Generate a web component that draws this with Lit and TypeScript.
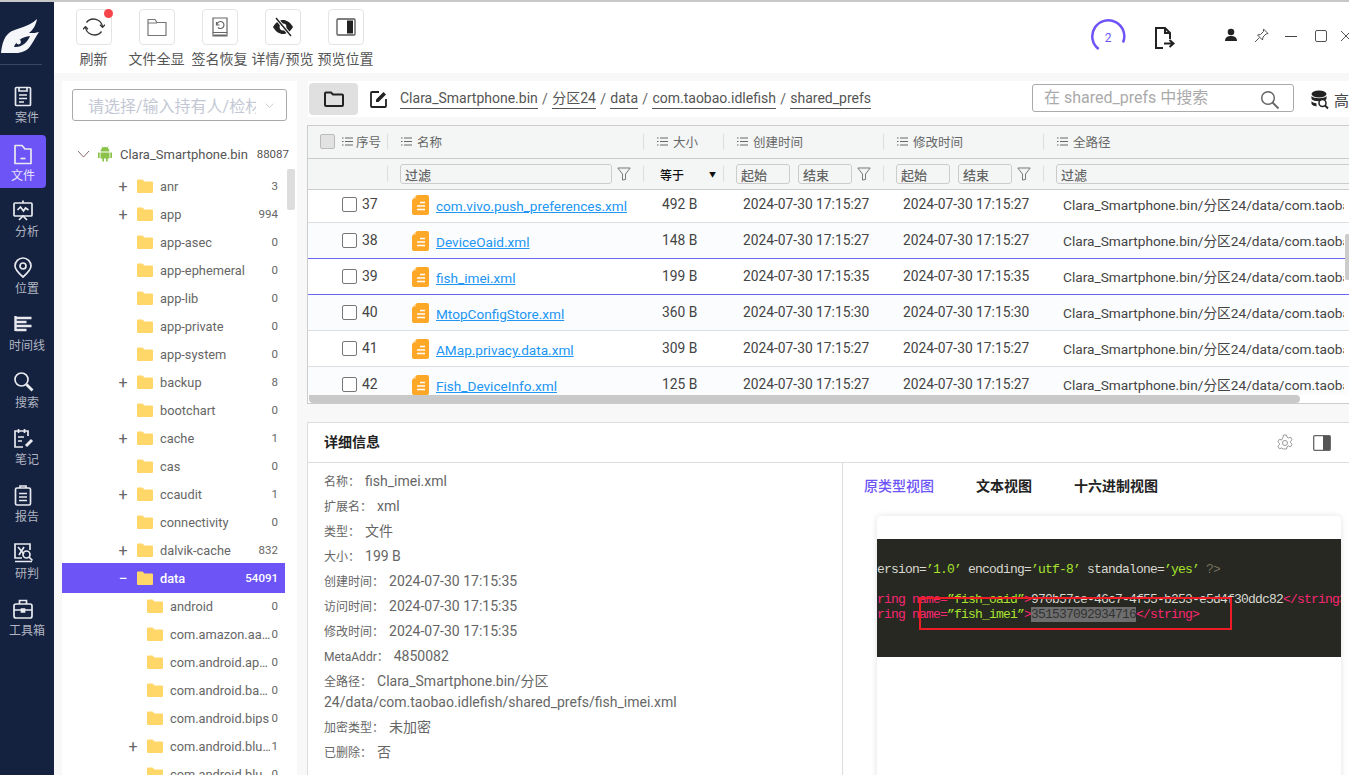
import { LitElement, html, css, svg } from "lit";
import { customElement } from "lit/decorators.js";

const navIcons: Record<string, unknown> = {
  case: svg`<rect x="3.500" y="2.500" width="15" height="18" rx="1"/><path d="M7 2.500v3.500h8V2.500M7 10h8M7 13.500h8M7 17h5"/>`,
  file: svg`<path d="M3 2.500h7l3 3.500h6v14.500H3z" stroke-linejoin="round"/><path d="M8.500 15.500h5"/>`,
  analysis: svg`<rect x="2" y="4" width="18" height="13" rx="1"/><path d="M11 1.500V4M5.500 11l3-3 3 4 2-3 3 2M7 21l4-4 4 4"/>`,
  loc: svg`<path d="M11 21c-4-3.500-8-7-8-11a8 8 0 0 1 16 0c0 4-4 7.500-8 11z"/><circle cx="11" cy="10" r="3"/>`,
  time: svg`<path d="M3.500 3v15M3.500 5h16M3.500 9h11M3.500 13h16M3.500 17h11" stroke-width="2.400"/>`,
  search: svg`<circle cx="9.500" cy="9.500" r="6.500"/><path d="M14.500 14.500l6 6" stroke-width="2.800"/>`,
  note: svg`<path d="M16 9V4H3v16h8M6.500 2v4M12.500 2v4M6 10h6M6 14h4"/><path d="M14 19l6-6" stroke-width="3"/>`,
  report: svg`<rect x="3.500" y="4" width="15" height="17" rx="1.500"/><path d="M8 4V2h6v2M7 9.500h8M7 13h8M7 16.500h8"/>`,
  judge: svg`<path d="M18 9V3H3v14h7M3 20.500h17M6 6l6 7M12 6l-5 8"/><circle cx="14.500" cy="13.500" r="3.500"/><path d="M17 16l3.500 3.500"/>`,
  tool: svg`<rect x="2" y="6" width="18" height="14" rx="2"/><path d="M7.500 6V2.500h7V6M2 12h18"/><path d="M9.500 11h3v3h-3z" fill="currentColor"/>`,
};

const nav = [
  ["case", "案件"], ["file", "文件"], ["analysis", "分析"], ["loc", "位置"], ["time", "时间线"],
  ["search", "搜索"], ["note", "笔记"], ["report", "报告"], ["judge", "研判"], ["tool", "工具箱"],
];

const tools: [unknown, string][] = [
  [svg`<path d="M3.500 6.500A9 9 0 0 1 19.500 11M18.500 15.500A9 9 0 0 1 2.500 11" fill="none" stroke="#333" stroke-width="1.300"/><path d="M17 8.800l2.500 2.500 2.500-2.500M0 13.200l2.500-2.500 2.500 2.500" fill="none" stroke="#333" stroke-width="1.300"/>`, "刷新"],
  [svg`<path d="M2 3.500h7l2 3h9v13H2zM2 7h9" fill="none" stroke="#777" stroke-width="1.200"/>`, "文件全显"],
  [svg`<path d="M4 2h14v18H4zM4 16.500h14M5 19h12" fill="none" stroke="#666" stroke-width="1.200"/><path d="M8 8.500a3.500 3.500 0 1 1 1 3M7.500 6v3h3" fill="none" stroke="#666" stroke-width="1.200"/>`, "签名恢复"],
  [svg`<path d="M1 11c3-5 6.500-7 10-7s7 2 10 7c-3 5-6.500 7-10 7s-7-2-10-7z" fill="#222"/><circle cx="11" cy="11" r="3.400" fill="#fff"/><path d="M4 2l15 18" stroke="#fff" stroke-width="3.500"/><path d="M4 2l15 18" stroke="#222" stroke-width="1.400"/>`, "详情/预览"],
  [svg`<rect x="2" y="3" width="18" height="16" rx="1" fill="none" stroke="#555" stroke-width="1.300"/><rect x="12" y="4.500" width="6" height="13" fill="#222"/>`, "预览位置"],
];

const tree: [number, boolean, string, string][] = [
  [1, true, "anr", "3"], [1, true, "app", "994"], [1, false, "app-asec", "0"], [1, false, "app-ephemeral", "0"],
  [1, false, "app-lib", "0"], [1, false, "app-private", "0"], [1, false, "app-system", "0"], [1, true, "backup", "8"],
  [1, false, "bootchart", "0"], [1, true, "cache", "1"], [1, false, "cas", "0"], [1, true, "ccaudit", "1"],
  [1, false, "connectivity", "0"], [1, true, "dalvik-cache", "832"], [1, true, "data", "54091"],
  [2, false, "android", "0"], [2, false, "com.amazon.aa…", "0"], [2, false, "com.android.ap…", "0"],
  [2, false, "com.android.ba…", "0"], [2, false, "com.android.bips", "0"], [2, true, "com.android.blu…", "1"],
  [2, false, "com.android.blu…", "0"],
];

const PATH = "Clara_Smartphone.bin/分区24/data/com.taobao.idlefish/shared_prefs";
const rows = [
  ["37", "com.vivo.push_preferences.xml", "492 B", "2024-07-30 17:15:27"],
  ["38", "DeviceOaid.xml", "148 B", "2024-07-30 17:15:27"],
  ["39", "fish_imei.xml", "199 B", "2024-07-30 17:15:35"],
  ["40", "MtopConfigStore.xml", "360 B", "2024-07-30 17:15:30"],
  ["41", "AMap.privacy.data.xml", "309 B", "2024-07-30 17:15:27"],
  ["42", "Fish_DeviceInfo.xml", "125 B", "2024-07-30 17:15:27"],
];

const fields = [
  ["名称：", "fish_imei.xml"], ["扩展名：", "xml"], ["类型：", "文件"], ["大小：", "199 B"],
  ["创建时间：", "2024-07-30 17:15:35"], ["访问时间：", "2024-07-30 17:15:35"], ["修改时间：", "2024-07-30 17:15:35"],
  ["MetaAddr：", "4850082"], ["全路径：", "Clara_Smartphone.bin/分区24/data/com.taobao.idlefish/shared_prefs/fish_imei.xml"],
  ["加密类型：", "未加密"], ["已删除：", "否"],
];

const listIcon = html`<svg class="li" width="11" height="9" viewBox="0 0 11 9"><path d="M0 1h1.500M3 1h8M0 4.500h1.500M3 4.500h8M0 8h1.500M3 8h8" stroke="#666" stroke-width="1" fill="none"/></svg>`;
const funnel = html`<svg class="fn" width="14" height="14" viewBox="0 0 14 14"><path d="M.8 1h12.400L8.500 7v5.500L5.500 13V7z" fill="none" stroke="#777" stroke-width="1"/></svg>`;
const folder = html`<svg class="folder" width="16" height="14" viewBox="0 0 16 14"><path d="M0 1.500A1 1 0 0 1 1 .5h4.500L7.500 2.500H15a1 1 0 0 1 1 1V13a1 1 0 0 1-1 1H1a1 1 0 0 1-1-1z" fill="#ffd768"/></svg>`;
const fileIcon = html`<svg class="fi" width="17" height="20" viewBox="0 0 17 20"><path d="M5 0h10a2 2 0 0 1 2 2v16a2 2 0 0 1-2 2H2a2 2 0 0 1-2-2V5z" fill="#ffa726"/><path d="M1 3.500L4 .5v3z" fill="#ffd08a"/><path d="M8 7.500h5M5 11h8M5 14.500h8" stroke="#fff" stroke-width="1.300"/></svg>`;

@customElement("app-root")
export class AppRoot extends LitElement {
  static styles = css`
    :host { display: block; width: 1349px; height: 775px; overflow: hidden; font-family: Roboto, "Noto Sans CJK SC", sans-serif; font-size: 13px; color: #555; background: #f8f8f8; }
    * { box-sizing: border-box; }
    .app { display: grid; grid-template-columns: 54px 1fr; height: 775px; border-top: 2px solid #c8c8c8; }
    .side { background: #14213f; color: #c4c8d2; display: flex; flex-direction: column; overflow: hidden; }
    .logo { height: 63px; margin-right: 12px; border-bottom: 1px solid #3b4663; padding: 17px 0 0 1px; flex: none; }
    .navs { display: flex; flex-direction: column; padding-top: 14px; }
    .nav { height: 57px; width: 54px; padding: 6px 8px 0 0; display: flex; flex-direction: column; align-items: center; font-size: 12px; line-height: 16px; white-space: nowrap; color: #b0b5c1; flex: none; }
    .nav svg { color: #e8eaf0; fill: none; stroke: currentColor; stroke-width: 1.700; margin-bottom: 3px; flex: none; }
    .nav.on { background: #6c54f7; color: #e8e4ff; width: 46px; height: 53px; margin: -1px 0 5px; padding: 8px 0 0; border-radius: 0 4px 4px 0; }
    .nav span { width: 54px; flex: none; text-align: center; margin: 0 -8px 0 0; }
    .nav.on span { width: 46px; margin: 0; }

    .main { display: flex; flex-direction: column; min-width: 0; }
    .top { height: 71px; background: #fff; display: flex; align-items: flex-start; padding: 7px 0 0 8px; flex: none; position: relative; }
    .tool { width: 63px; display: flex; flex-direction: column; align-items: center; color: #555; font-size: 14px; line-height: 18px; white-space: nowrap; position: relative; }
    .tbox { width: 36px; height: 36px; border: 1px solid #e4e4e4; border-radius: 4px; display: flex; align-items: center; justify-content: center; margin-bottom: 5px; background: #fff; }
    .dot { position: absolute; width: 9px; height: 9px; background: #f5454a; border-radius: 50%; top: 0; left: 42px; }
    .body { flex: 1; display: flex; padding: 8px 0 0 8px; min-height: 0; gap: 11px; }
    .tree { width: 235px; background: #fff; position: relative; flex: none; padding: 8px 0 0 0; overflow: hidden; }
    .sel { margin-left: 10px; width: 215px; height: 32px; border: 1px solid #aaa; border-radius: 3px; display: flex; align-items: center; padding: 0 12px 0 15px; color: #c3c8d4; font-size: 16px; white-space: nowrap; overflow: hidden; }
    .sel span { width: 168px; overflow: hidden; margin-right: 9px; flex: none; }
    .root { height: 28px; margin-top: 19px; display: flex; align-items: center; padding-left: 15px; color: #555; }
    .root .n { margin-left: 8px; font-size: 13px; }
    .root .c { margin-left: auto; font-size: 11.500px; margin-right: 8px; }
    .nodes { margin-top: 4px; width: 223px; }
    .node { height: 28px; display: flex; align-items: center; position: relative; font-size: 12.800px; color: #666; }
    .node.act { background: #6c54f7; color: #fff; font-weight: 500; box-shadow: 0 -1px 0 #6c54f7, 0 1px 0 #6c54f7; }
    .tg { width: 16px; text-align: center; font-size: 16px; font-weight: 400; color: #666; flex: none; margin-right: 6px; }
    .node.act .tg { color: #fff; }
    .folder { flex: none; margin-right: 7px; }
    .nm { flex: 1; overflow: hidden; white-space: nowrap; min-width: 0; }
    .ct { font-size: 11.500px; margin-right: 7px; margin-left: 2px; color: #666; }
    .node.act .ct { color: #fff; }
    .tsb { position: absolute; left: 225px; top: 88px; width: 8px; height: 41px; background: #ddd; border-radius: 2px; }

    .right { flex: 1; min-width: 0; display: flex; flex-direction: column; }
    .crumb { height: 36px; background: #fff; display: flex; align-items: center; padding-left: 1px; position: relative; white-space: nowrap; flex: none; overflow: hidden; }
    .fb { width: 49px; height: 32px; background: #e0e0e0; border-radius: 4px; display: flex; align-items: center; justify-content: center; flex: none; }
    .eb { margin: 0 12px 0 11px; flex: none; display: flex; }
    .cr { font-size: 14px; color: #555; border-bottom: 1px solid #555; line-height: 19px; margin-bottom: 1px; }
    .slash { margin: 0 4.300px 1px; color: #666; font-size: 14px; }
    .srch { position: absolute; left: 724px; top: 3px; width: 262px; height: 28px; border: 1px solid #aaa; border-radius: 3px; padding: 0 13px 0 11px; display: flex; align-items: center; justify-content: space-between; color: #aaa; font-size: 16px; }
    .srch span { margin-top: -5px; }
    .srch svg { margin-top: 4px; }
    .db { position: absolute; left: 1003px; top: 8px; display: flex; align-items: center; gap: 5px; font-size: 15px; color: #444; }

    .table { margin-top: 8px; height: 279px; border: 1px solid #ccc; border-right: none; position: relative; overflow: hidden; background: #fff; flex: none; margin-left: -1px; }
    .hr { display: grid; grid-template-columns: 80px 256px 80px 160px 160px 1fr; background: #f4f6f6; align-items: center; }
    .h1 { height: 33px; border-bottom: 1px solid #ccc; font-size: 12.500px; color: #666; padding-bottom: 1px; }
    .h2 { height: 31px; border-bottom: 1px solid #ccc; }
    .hc { height: 16px; display: flex; align-items: center; padding-left: 13px; gap: 5px; border-right: 1px solid #ddd; white-space: nowrap; }
    .hc:last-child { border-right: none; }
    .h1 .first { padding-left: 12px; gap: 3px; }
    .cb0 { width: 15px; height: 15px; background: #e2e2e2; border: 1px solid #bbb; border-radius: 2px; margin-right: 4px; flex: none; }
    .h2 .hc { padding-left: 12px; gap: 8px; }
    .h2 .fn { margin-left: -3px; }
    .inp { height: 20px; border: 1px solid #ccc; border-radius: 3px; background: #f4f6f6; color: #666; font-size: 13px; display: flex; align-items: center; padding-left: 4px; flex: none; font-weight: 500; }
    .eq { color: #111; font-size: 12px; width: 60px; padding-left: 4px; display: flex; justify-content: space-between; align-items: center; font-weight: 500; }
    .eq i { font-style: normal; font-size: 7px; }
    .rows { height: 205px; overflow: hidden; }
    .rowsin { margin-top: -3px; }
    .row { display: grid; grid-template-columns: 80px 256px 80px 160px 160px 300px; height: 36px; border-bottom: 1px solid #dcdfe2; align-items: center; color: #444; font-size: 13.800px; background: #fff; white-space: nowrap; }
    .row.alt { background: #fbfcfe; }
    .row.pre, .row.sel2 { border-bottom-color: #6a66f8; }
    .cnum { display: flex; align-items: center; padding-left: 34px; gap: 5px; font-size: 14px; color: #444; margin-top: -1px; }
    .cb { width: 15px; height: 15px; border: 1px solid #777; border-radius: 2px; background: #fff; flex: none; }
    .cname { display: flex; align-items: center; padding-left: 24px; gap: 7px; }
    .lnk { color: #2196f3; text-decoration: underline; font-size: 13.600px; margin-top: 3px; }
    .csz { padding-left: 18px; margin-top: -2px; }
    .cdt { padding-left: 19px; margin-top: -2px; }
    .cpath { padding-left: 19px; overflow: hidden; margin-top: -2px; font-size: 13.700px; }
    .hsb { position: absolute; left: 1px; bottom: 0; height: 8px; width: 991px; background: #c9c9c9; border-radius: 0 4px 4px 4px; }
    .vsb { position: absolute; left: 1037px; top: 108px; width: 5px; height: 46px; background: #ccc; border-radius: 2px; }

    .detail { margin: 18px 0 0 -1px; flex: 1; background: #fff; border: 1px solid #ddd; border-right: none; border-bottom: none; display: flex; flex-direction: column; min-height: 0; }
    .dh { height: 40px; flex: none; border-bottom: 1px solid #ddd; display: flex; align-items: center; padding: 0 18px 4px 16px; font-weight: 700; color: #222; font-size: 14px; }
    .dh .gr { margin-left: auto; display: flex; align-items: center; gap: 19px; margin-top: 4px; }
    .split { flex: 1; display: grid; grid-template-columns: 535px 1fr; min-height: 0; overflow: hidden; }
    .fields { border-right: 1px solid #ddd; padding: 6px 16px 0 16px; }
    .fld { line-height: 21px; padding: 2px 0; color: #666; font-size: 14px; }
    .fld b { font-weight: 400; font-size: 12px; line-height: 1; color: #666; margin-right: 5px; }
    .pv { padding: 13px 8px 0 21px; min-width: 0; }
    .tabs { display: flex; font-size: 14px; font-weight: 700; color: #222; height: 20px; line-height: 20px; gap: 42px; }
    .tabs .on { color: #6c54f7; font-weight: 500; }
    .card { margin: 20px 0 0 13px; background: #fff; box-shadow: 0 0 6px rgba(0,0,0,.12); border-radius: 4px 4px 0 0; height: 280px; padding-top: 23px; position: relative; }
    .code { background: #272822; height: 118px; padding-top: 23px; font-family: "Liberation Mono", monospace; font-size: 13px; letter-spacing: -.8px; line-height: 15px; white-space: pre; overflow: hidden; color: #d8d8d0; }
    .g { color: #a6e22e; } .r { color: #f92672; } .m { color: #75715e; } .hl { background: #6e6e6e; color: #333; }
    .red { position: absolute; left: 42px; top: 81px; width: 313px; height: 33px; border: 2px solid #ee1c25; }
    .ctl { position: absolute; left: 1034px; top: 0; width: 315px; height: 56px; }
    .ctl > * { position: absolute; }
    .spin { left: 2px; top: 17px; } .exp { left: 64px; top: 24px; } .usr { left: 136px; top: 26px; } .pin { left: 166px; top: 26px; }
    .min { left: 197px; top: 34px; width: 12px; height: 1px; background: #444; }
    .max { left: 227px; top: 28px; width: 12px; height: 12px; border: 1px solid #555; border-radius: 2px; }
    .cls { left: 252px; top: 28px; }
  `;

  render() {
    return html`<div class="app">
      <aside class="side">
        <div class="logo">
          <svg width="40" height="36" viewBox="0 0 40 36"><path fill="#f4f6fa" d="M0 34C1 25 3 18 8 14 14 9 27 9 36 0 35 6 32 11 28 14 32 14 35 14 38 13 35 17 33 22 30 26 27 31 23 33 17 34Z"/><path fill="#14213f" d="M13 28C15 22 21 18 29 17 27 23 20 29 13 28Z"/><circle cx="17.500" cy="23" r="2.400" fill="#f4f6fa"/></svg>
        </div>
        <div class="navs">
          ${nav.map(([k, l]) => html`<div class="nav ${k === "file" ? "on" : ""}"><svg width="22" height="22" viewBox="0 0 22 22">${navIcons[k]}</svg><span>${l}</span></div>`)}
        </div>
      </aside>
      <div class="main">
        <header class="top">
          ${tools.map(([ic, l], i) => html`<div class="tool"><div class="tbox"><svg width="22" height="22" viewBox="0 0 22 22">${ic}</svg></div>${l}${i === 0 ? html`<span class="dot"></span>` : ""}</div>`)}
          <div class="ctl">
            <svg class="spin" width="36" height="36" viewBox="0 0 36 36"><path d="M10 31A16 16 0 1 1 33.500 22" fill="none" stroke="#6c54f7" stroke-width="2.500" transform="rotate(6 18 18)"/><text x="18" y="22.500" text-anchor="middle" font-size="12" fill="#6c54f7" font-family="Roboto">2</text></svg>
            <svg class="exp" width="24" height="24" viewBox="0 0 24 24"><path d="M11 22H4V2h9l5 5v6M13 2v5h5M12 17.500h9M17.500 14l4 3.500-4 3.500" fill="none" stroke="#222" stroke-width="2"/></svg>
            <svg class="usr" width="14" height="14" viewBox="0 0 14 14"><circle cx="7" cy="4" r="3.300" fill="#222"/><path d="M1 13c0-4 3-5 6-5s6 1 6 5z" fill="#222"/></svg>
            <svg class="pin" width="15" height="15" viewBox="0 0 15 15"><path d="M9.500 1L14 5.500l-2 .5-3 3-.5 3L3.500 7l3-.5 3-3zM5.500 9.500L1 14" fill="none" stroke="#555" stroke-width="1"/></svg>
            <span class="min"></span>
            <span class="max"></span>
            <svg class="cls" width="12" height="12" viewBox="0 0 12 12"><path d="M1 1l10 10M11 1L1 11" stroke="#555" stroke-width="1"/></svg>
          </div>
        </header>
        <div class="body">
          <section class="tree">
            <div class="sel"><span>请选择/输入持有人/检材名称</span><svg width="12" height="7" viewBox="0 0 12 7"><path d="M1 1l5 5 5-5" fill="none" stroke="#bbb"/></svg></div>
            <div class="root">
              <svg width="13" height="8" viewBox="0 0 13 8" style="margin-right:8px"><path d="M1 1l5.500 6L12 1" fill="none" stroke="#8a6a6a"/></svg>
              <svg width="14" height="16" viewBox="0 0 14 16"><path d="M2.500 5.500a4.500 4.500 0 0 1 9 0zM2.500 6.500h9v6h-1.800v3H8v-3H6v3H4.300v-3H2.500zM0 6.500h1.700v5.500H0zM12.300 6.500H14v5.500h-1.700z" fill="#8bc34a"/><path d="M4 .5l1.200 1.800M10 .5L8.800 2.300" stroke="#8bc34a" stroke-width=".8"/></svg>
              <span class="n">Clara_Smartphone.bin</span><span class="c">88087</span>
            </div>
            <div class="nodes">
              ${tree.map(([lv, exp, name, c]) => {
                const act = name === "data";
                return html`<div class="node ${act ? "act" : ""}" style="padding-left:${lv === 1 ? 53 : 63}px">
                  <span class="tg">${exp ? (act ? "−" : "+") : ""}</span>${folder}<span class="nm">${name}</span><span class="ct">${c}</span>
                </div>`;
              })}
            </div>
            <div class="tsb"></div>
          </section>
          <section class="right">
            <div class="crumb">
              <div class="fb"><svg width="20" height="16" viewBox="0 0 20 16"><path d="M1 2.500A1 1 0 0 1 2 1.500h5l2 2h9a1 1 0 0 1 1 1V14a1 1 0 0 1-1 1H2a1 1 0 0 1-1-1z" fill="none" stroke="#222" stroke-width="2"/></svg></div>
              <div class="eb"><svg width="19" height="19" viewBox="0 0 19 19"><path d="M10 2H3a1 1 0 0 0-1 1v13a1 1 0 0 0 1 1h13a1 1 0 0 0 1-1V9" fill="none" stroke="#222" stroke-width="1.800"/><path d="M7 12V9.500L14.500 2 17 4.500 9.500 12z" fill="#222"/></svg></div>
              <span class="cr">Clara_Smartphone.bin</span><span class="slash">/</span>
              <span class="cr">分区24</span><span class="slash">/</span>
              <span class="cr">data</span><span class="slash">/</span>
              <span class="cr">com.taobao.idlefish</span><span class="slash">/</span>
              <span class="cr">shared_prefs</span>
              <div class="srch"><span>在 shared_prefs 中搜索</span><svg width="20" height="20" viewBox="0 0 20 20"><circle cx="8" cy="8" r="6.300" fill="none" stroke="#666" stroke-width="1.500"/><path d="M12.500 12.500l6 6" stroke="#666" stroke-width="1.800"/></svg></div>
              <div class="db"><svg width="18" height="20" viewBox="0 0 18 20"><ellipse cx="8" cy="4" rx="7.500" ry="3.500" fill="#222"/><path d="M.5 6c2 3 13 3 15 0v3c-2 3-13 3-15 0zM.5 11c1 1.500 3 2 5 2.500v3c-2-.5-4-1-5-2.500z" fill="#222"/><circle cx="11.500" cy="13" r="3.500" fill="#fff" stroke="#222" stroke-width="1.500"/><path d="M14 15.500l3 3" stroke="#222" stroke-width="1.800"/></svg><span>高</span></div>
            </div>
            <div class="table">
              <div class="hr h1">
                <div class="hc first"><span class="cb0"></span>${listIcon}<span>序号</span></div>
                <div class="hc">${listIcon}名称</div>
                <div class="hc">${listIcon}大小</div>
                <div class="hc">${listIcon}创建时间</div>
                <div class="hc">${listIcon}修改时间</div>
                <div class="hc">${listIcon}全路径</div>
              </div>
              <div class="hr h2">
                <div class="hc"></div>
                <div class="hc"><span class="inp" style="width:212px">过滤</span>${funnel}</div>
                <div class="hc"><span class="eq">等于<i>▼</i></span></div>
                <div class="hc"><span class="inp" style="width:54px">起始</span><span class="inp" style="width:54px">结束</span>${funnel}</div>
                <div class="hc"><span class="inp" style="width:54px">起始</span><span class="inp" style="width:54px">结束</span>${funnel}</div>
                <div class="hc"><span class="inp" style="width:300px">过滤</span></div>
              </div>
              <div class="rows"><div class="rowsin">
                ${rows.map(([n, f, s, d], i) => html`<div class="row ${i % 2 ? "alt" : ""} ${i === 1 ? "pre" : ""} ${i === 2 ? "sel2" : ""}">
                  <div class="cnum"><span class="cb"></span>${n}</div>
                  <div class="cname">${fileIcon}<span class="lnk">${f}</span></div>
                  <div class="csz">${s}</div>
                  <div class="cdt">${d}</div>
                  <div class="cdt">${d}</div>
                  <div class="cpath">${PATH}</div>
                </div>`)}
              </div></div>
              <div class="hsb"></div>
              <div class="vsb"></div>
            </div>
            <div class="detail">
              <div class="dh">详细信息<div class="gr">
                <svg width="18" height="18" viewBox="0 0 18 18"><path d="M7.500 1h3l.5 2.200 1.500.8 2.100-.8 1.500 2.600-1.600 1.500v1.400l1.600 1.500-1.500 2.600-2.100-.8-1.500.8-.5 2.200h-3L7 14.800 5.500 14l-2.100.8-1.500-2.600 1.600-1.500V9.300L1.900 7.800l1.500-2.600 2.100.8L7 3.200z" fill="none" stroke="#999"/><circle cx="9" cy="9" r="2.500" fill="none" stroke="#999"/></svg>
                <svg width="18" height="16" viewBox="0 0 18 16"><rect x=".7" y=".7" width="16.600" height="14.600" rx="1" fill="none" stroke="#666" stroke-width="1.300"/><rect x="10" y="1" width="7" height="14" fill="#555"/></svg>
              </div></div>
              <div class="split">
                <div class="fields">
                  ${fields.map(([k, v]) => html`<div class="fld"><b>${k}</b>${v}</div>`)}
                </div>
                <div class="pv">
                  <div class="tabs"><span class="on">原类型视图</span><span>文本视图</span><span>十六进制视图</span></div>
                  <div class="card">
                    <div class="code">ersion=<span class="g">’1.0’</span> encoding=<span class="g">’utf-8’</span> standalone=<span class="g">’yes’</span> <span class="m">?&gt;</span>

<span class="r">ring name=</span><span class="g">”fish_oaid”</span><span class="r">&gt;</span>970b57ce-46c7-4f55-b253-e5d4f30ddc82<span class="r">&lt;/string&gt;</span>
<span class="r">ring name=</span><span class="g">”fish_imei”</span><span class="r">&gt;</span><span class="hl">351537092934716</span><span class="r">&lt;/string&gt;</span></div>
                    <div class="red"></div>
                  </div>
                </div>
              </div>
            </div>
          </section>
        </div>
      </div>
    </div>`;
  }
}
